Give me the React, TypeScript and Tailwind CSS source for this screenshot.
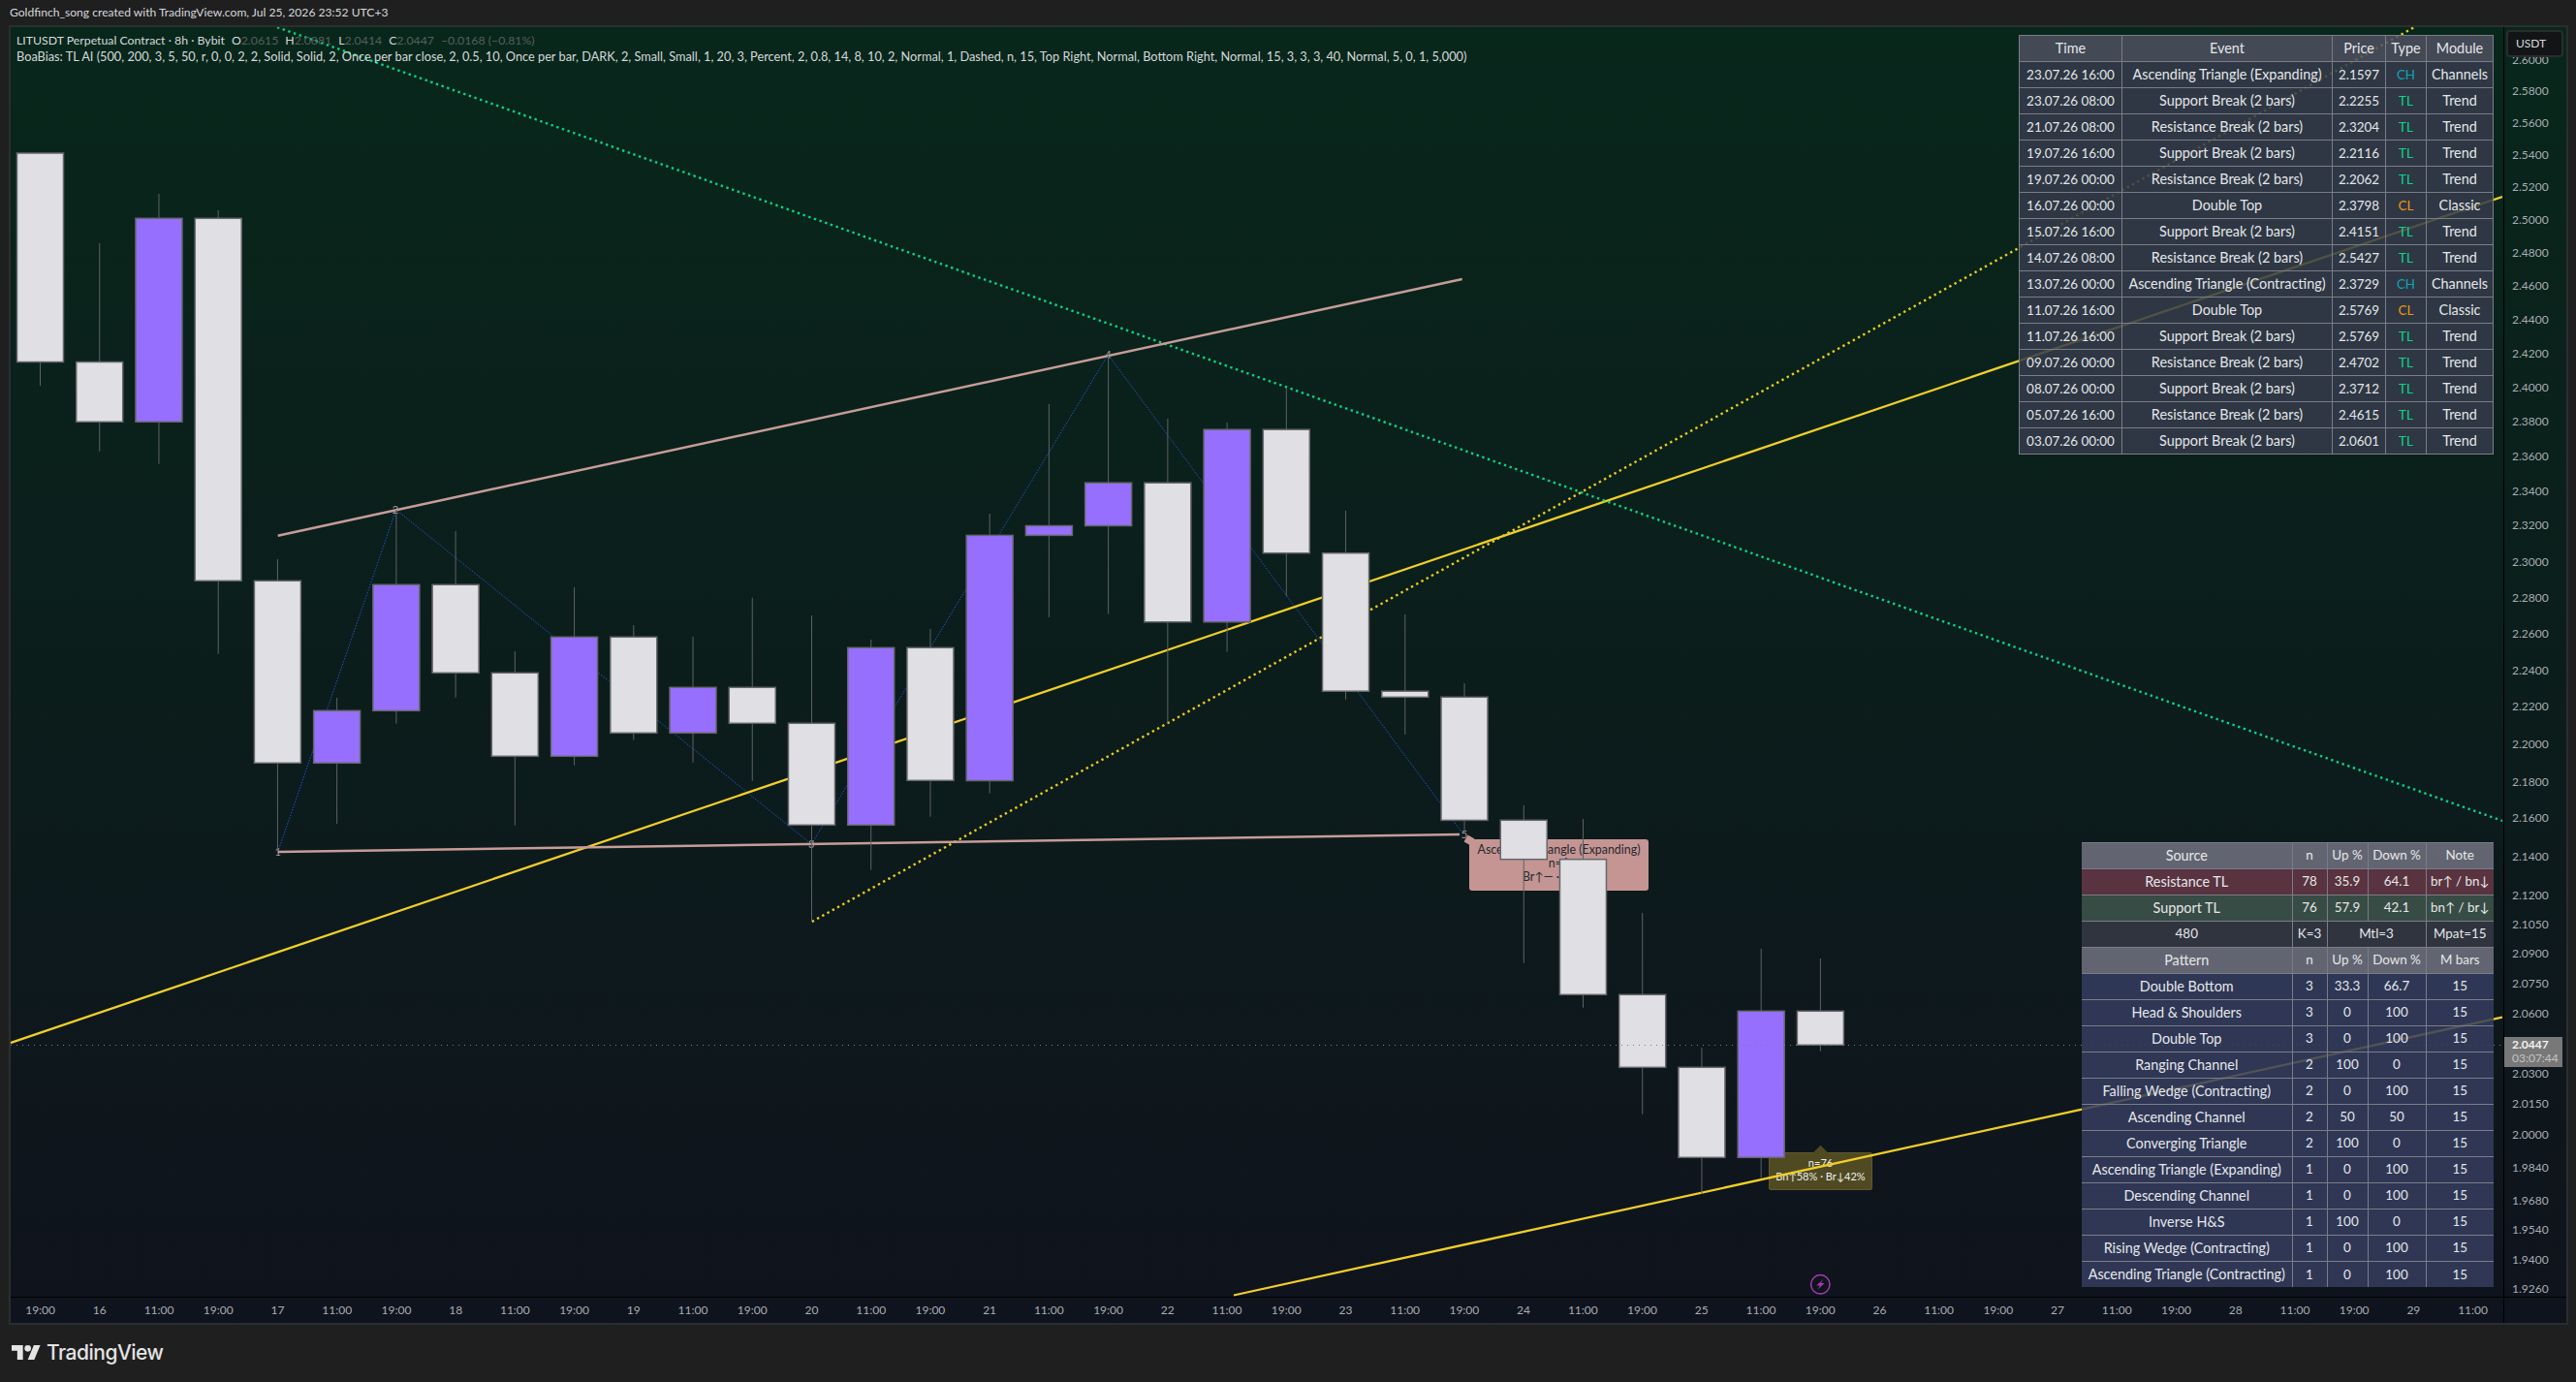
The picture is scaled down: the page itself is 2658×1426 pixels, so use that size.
import React from 'react';

const font = "font-['Lato','Liberation_Sans',sans-serif]";

// [top, bottom, wickTop, wickBottom, purple]
const candles: [number, number, number, number, boolean][] = [
  [158, 373.5, 158, 398, false],
  [373.5, 435.3, 251, 465.7, false],
  [225.3, 435.3, 200, 478.7, true],
  [225.3, 599.3, 217, 674.7, false],
  [599.3, 787.3, 577, 879, false],
  [733.3, 787.3, 720, 850, true],
  [603.3, 733.3, 526, 746.7, true],
  [603.3, 694.3, 548, 719.7, false],
  [694.3, 780.3, 672, 851.7, false],
  [657.3, 780.3, 606, 789.7, true],
  [657.3, 756.3, 645, 763.7, false],
  [709.3, 756.3, 657, 786.7, true],
  [709.3, 746.3, 616.7, 805.7, false],
  [746.3, 851.3, 635, 951, false],
  [668.3, 851.3, 660, 897.7, true],
  [668.3, 805.3, 649, 842.7, false],
  [552.4, 805.5, 530, 818.6, true],
  [542.5, 552.4, 417, 636.8, true],
  [498.2, 542.5, 366.8, 633.6, true],
  [498.2, 641.8, 432, 746.4, false],
  [443.2, 641.8, 436, 672.5, true],
  [443.2, 570.7, 400.7, 615, false],
  [570.7, 713.2, 527, 721.8, false],
  [713.2, 719.3, 634, 757.9, false],
  [719.3, 846.4, 705, 860, false],
  [846.3, 886.7, 831, 993.7, false],
  [886.7, 1026.3, 845, 1039.7, false],
  [1026.3, 1101.3, 942, 1149.7, false],
  [1101.3, 1194.3, 1081, 1231.7, false],
  [1043.3, 1194.3, 979, 1215.7, true],
  [1043.3, 1078.3, 989, 1084.7, false],
];

const prices: [string, number][] = [
  ['2.6000', 62], ['2.5800', 93.7], ['2.5600', 126.7], ['2.5400', 159.7], ['2.5200', 192.7], ['2.5000', 226.7],
  ['2.4800', 260.7], ['2.4600', 294.7], ['2.4400', 329.7], ['2.4200', 364.7], ['2.4000', 399.7], ['2.3800', 434.7],
  ['2.3600', 470.7], ['2.3400', 507], ['2.3200', 542.4], ['2.3000', 579.7], ['2.2800', 617], ['2.2600', 654],
  ['2.2400', 691.6], ['2.2200', 729], ['2.2000', 768], ['2.1800', 807], ['2.1600', 844], ['2.1400', 884.3],
  ['2.1200', 924.3], ['2.1050', 954.3], ['2.0900', 984.3], ['2.0750', 1015.3], ['2.0600', 1046.3], ['2.0300', 1108.3],
  ['2.0150', 1139.3], ['2.0000', 1171.3], ['1.9840', 1205.3], ['1.9680', 1239.3], ['1.9540', 1269.3], ['1.9400', 1300.3],
  ['1.9260', 1330.3],
];

const times = [
  '19:00', '16', '11:00', '19:00', '17', '11:00', '19:00', '18', '11:00', '19:00', '19', '11:00', '19:00', '20',
  '11:00', '19:00', '21', '11:00', '19:00', '22', '11:00', '19:00', '23', '11:00', '19:00', '24', '11:00', '19:00',
  '25', '11:00', '19:00', '26', '11:00', '19:00', '27', '11:00', '19:00', '28', '11:00', '19:00', '29', '11:00',
];

const events = [
  ['23.07.26 16:00', 'Ascending Triangle (Expanding)', '2.1597', 'CH', 'Channels'],
  ['23.07.26 08:00', 'Support Break (2 bars)', '2.2255', 'TL', 'Trend'],
  ['21.07.26 08:00', 'Resistance Break (2 bars)', '2.3204', 'TL', 'Trend'],
  ['19.07.26 16:00', 'Support Break (2 bars)', '2.2116', 'TL', 'Trend'],
  ['19.07.26 00:00', 'Resistance Break (2 bars)', '2.2062', 'TL', 'Trend'],
  ['16.07.26 00:00', 'Double Top', '2.3798', 'CL', 'Classic'],
  ['15.07.26 16:00', 'Support Break (2 bars)', '2.4151', 'TL', 'Trend'],
  ['14.07.26 08:00', 'Resistance Break (2 bars)', '2.5427', 'TL', 'Trend'],
  ['13.07.26 00:00', 'Ascending Triangle (Contracting)', '2.3729', 'CH', 'Channels'],
  ['11.07.26 16:00', 'Double Top', '2.5769', 'CL', 'Classic'],
  ['11.07.26 16:00', 'Support Break (2 bars)', '2.5769', 'TL', 'Trend'],
  ['09.07.26 00:00', 'Resistance Break (2 bars)', '2.4702', 'TL', 'Trend'],
  ['08.07.26 00:00', 'Support Break (2 bars)', '2.3712', 'TL', 'Trend'],
  ['05.07.26 16:00', 'Resistance Break (2 bars)', '2.4615', 'TL', 'Trend'],
  ['03.07.26 00:00', 'Support Break (2 bars)', '2.0601', 'TL', 'Trend'],
];

const patterns = [
  ['Double Bottom', '3', '33.3', '66.7', '15'],
  ['Head & Shoulders', '3', '0', '100', '15'],
  ['Double Top', '3', '0', '100', '15'],
  ['Ranging Channel', '2', '100', '0', '15'],
  ['Falling Wedge (Contracting)', '2', '0', '100', '15'],
  ['Ascending Channel', '2', '50', '50', '15'],
  ['Converging Triangle', '2', '100', '0', '15'],
  ['Ascending Triangle (Expanding)', '1', '0', '100', '15'],
  ['Descending Channel', '1', '0', '100', '15'],
  ['Inverse H&S', '1', '100', '0', '15'],
  ['Rising Wedge (Contracting)', '1', '0', '100', '15'],
  ['Ascending Triangle (Contracting)', '1', '0', '100', '15'],
];

const typeColor: Record<string, string> = {
  CH: 'text-[#0fa3b8]',
  TL: 'text-[#0bd58a]',
  CL: 'text-[#f2960c]',
};

const words = 'text-[14.4px]';
const cell = 'border border-[#7a7d88] p-0 text-center font-normal whitespace-nowrap';

function EventsTable() {
  return (
    <table className="absolute right-[10px] top-[8px] w-[489px] table-fixed border-collapse text-[13.4px] text-[#e4e6ea]">
      <colgroup>
        <col className="w-[106px]" />
        <col className="w-[217px]" />
        <col className="w-[55px]" />
        <col className="w-[42px]" />
        <col className="w-[69px]" />
      </colgroup>
      <thead>
        <tr className="h-[27px] bg-[#4d505f]/85">
          {['Time', 'Event', 'Price', 'Type', 'Module'].map((h) => (
            <th key={h} className={`${cell} ${words}`}>{h}</th>
          ))}
        </tr>
      </thead>
      <tbody>
        {events.map((r, i) => (
          <tr key={i} className="h-[27px] bg-[#353b4a]/85">
            <td className={cell}>{r[0]}</td>
            <td className={`${cell} ${words}`}>{r[1]}</td>
            <td className={cell}>{r[2]}</td>
            <td className={`${cell} ${typeColor[r[3]]}`}>{r[3]}</td>
            <td className={`${cell} ${words}`}>{r[4]}</td>
          </tr>
        ))}
      </tbody>
    </table>
  );
}

const cellB = 'border-x border-t border-[#7a7d88] first:border-l-0 last:border-r-0 p-0 text-center font-normal whitespace-nowrap';

function StatsTable() {
  const head = (labels: string[]) => (
    <tr className="h-[27px] bg-[#727380]/85">
      {labels.map((h, i) => (
        <th key={h} className={`${cellB} ${i === 0 ? words : ''}`}>{h}</th>
      ))}
    </tr>
  );
  return (
    <table className="absolute bottom-[10px] right-[10px] w-[425px] table-fixed border-collapse text-[13.4px] text-[#e6e7ea]">
      <colgroup>
        <col className="w-[217px]" />
        <col className="w-[36px]" />
        <col className="w-[42px]" />
        <col className="w-[60px]" />
        <col className="w-[70px]" />
      </colgroup>
      <tbody>
        {head(['Source', 'n', 'Up %', 'Down %', 'Note'])}
        <tr className="h-[27px] bg-[#673845]/85">
          <td className={`${cellB} ${words}`}>Resistance TL</td>
          <td className={cellB}>78</td>
          <td className={cellB}>35.9</td>
          <td className={cellB}>64.1</td>
          <td className={cellB}>br↑ / bn↓</td>
        </tr>
        <tr className="h-[27px] bg-[#3f564b]/85">
          <td className={`${cellB} ${words}`}>Support TL</td>
          <td className={cellB}>76</td>
          <td className={cellB}>57.9</td>
          <td className={cellB}>42.1</td>
          <td className={cellB}>bn↑ / br↓</td>
        </tr>
        <tr className="h-[27px] bg-[#363945]/85">
          <td className={cellB}>480</td>
          <td className={cellB}>K=3</td>
          <td className={cellB} colSpan={2}>Mtl=3</td>
          <td className={cellB}>Mpat=15</td>
        </tr>
        {head(['Pattern', 'n', 'Up %', 'Down %', 'M bars'])}
        {patterns.map((r) => (
          <tr key={r[0]} className="h-[27px] bg-[#353d5f]/85">
            {r.map((c, i) => (
              <td key={i} className={`${cellB} ${i === 0 ? words : ''}`}>{c}</td>
            ))}
          </tr>
        ))}
      </tbody>
    </table>
  );
}

function ChartDrawing() {
  return (
    <svg className="absolute inset-0" width="2571" height="1310" viewBox="11 28 2571 1310">
      {/* zigzag */}
      <polyline
        points="286.7,879 408.7,526 837.3,871 1143.4,366 1510,861"
        fill="none"
        stroke="#2152d6"
        strokeWidth="1"
        strokeDasharray="1.5 1.5"
      />
      {/* trend lines */}
      <line x1="10" y1="1076.4" x2="2582" y2="203" stroke="#f2cf26" strokeWidth="2.3" />
      <line x1="1273" y1="1336.5" x2="2582" y2="1049.5" stroke="#f2cf26" strokeWidth="2.3" />
      <line x1="837.8" y1="951" x2="2493" y2="27" stroke="#eccb23" strokeWidth="2.4" strokeDasharray="2.4 3.6" />
      <line x1="286" y1="28" x2="2582" y2="847" stroke="#06d681" strokeWidth="2.4" strokeDasharray="2.4 3.6" />
      <line x1="286.7" y1="552.7" x2="1508.7" y2="288" stroke="#c79c99" strokeWidth="2.5" />
      <line x1="286.7" y1="879" x2="1506" y2="861" stroke="#c79c99" strokeWidth="2.5" />
      {[
        ['1', 286.7, 879],
        ['2', 408, 526],
        ['3', 837.3, 871],
        ['4', 1143.4, 366],
        ['5', 1511, 861],
      ].map(([n, x, y]) => (
        <text key={n as string} x={x as number} y={(y as number) + 4} textAnchor="middle" fontSize="11" fill="#a99a9a" fontFamily="Lato">
          {n}
        </text>
      ))}
      {/* candles */}
      {candles.map(([t, b, wt, wb, up], i) => {
        const cx = 41.5 + 61.23 * i;
        return (
          <g key={i}>
            <line x1={cx} y1={wt} x2={cx} y2={wb} stroke="#5f6166" strokeWidth="1" />
            <rect x={cx - 24} y={t} width="48" height={b - t} fill={up ? '#976fff' : '#dfdfe4'} stroke="#66676c" strokeWidth="1.5" />
          </g>
        );
      })}
      {/* last price */}
      <line x1="11" y1="1078.5" x2="2582" y2="1078.5" stroke="#7b7e85" strokeWidth="1" strokeDasharray="1 5" />
      {/* alert marker */}
      <circle cx="1878.3" cy="1325.3" r="9.7" fill="none" stroke="#a53bb0" strokeWidth="1.5" />
      <path d="M1881.5 1319.8 L1874.3 1326.6 L1878 1326.6 L1875.3 1331 L1882.6 1324 L1878.8 1324 Z" fill="#a53bb0" />
    </svg>
  );
}

function Ohlc({ k, v }: { k: string; v: string }) {
  return (
    <span>
      {k}
      <span className="text-[#585d5f]">{v}</span>
    </span>
  );
}

export default function App() {
  return (
    <div className={`flex h-[1426px] w-[2658px] flex-col overflow-hidden bg-[#1f1f1f] ${font} text-[13px] text-[#d6d8dc]`}>
      <div className="flex h-[26px] items-center pl-[10px] text-[12.1px]">
        Goldfinch_song created with TradingView.com, Jul 25, 2026 23:52 UTC+3
      </div>

      <div className="ml-[9px] mr-[8px] flex h-[1341px] flex-col border-2 border-[#2b2e30] bg-gradient-to-b from-[#08271b] via-[#0b1d1b] to-[#0f131d]">
        <div className="flex flex-1">
          <div className="relative flex-1 overflow-hidden">
            {/* labels sit under the candles */}
            <div className="absolute left-[1505px] top-[838px] h-[53px] w-[185px] rounded-[3px] bg-[#c49593] pt-[4px] text-center text-[12.4px] leading-[14px] text-[#27292c]">
              <div className="absolute -left-[4px] -top-[3px] size-[8px] rotate-[30deg] bg-[#c49593]" />
              <div>Ascending Triangle (Expanding)</div>
              <div>n=1</div>
              <div>Br↑— · Bn↓—</div>
            </div>
            <div className="absolute left-[1814px] top-[1161px] h-[39px] w-[107px] rounded-[2px] border border-[#5f5a2a] bg-[#4f4a22] pt-[3px] text-center text-[11px] leading-[14px] text-[#eeeeee]">
              <div className="absolute -top-[6px] left-[47px] size-[11px] rotate-45 bg-[#4f4a22]" />
              <div className="relative">n=76</div>
              <div className="relative">Bn↑58% · Br↓42%</div>
            </div>

            <ChartDrawing />

            <div className="absolute left-[6px] top-[5px] whitespace-nowrap leading-[17px] text-[#d6d8dc]">
              <div className="flex gap-[7px] text-[12.3px]">
                <span>LITUSDT Perpetual Contract · 8h · Bybit</span>
                <Ohlc k="O" v="2.0615" />
                <Ohlc k="H" v="2.0881" />
                <Ohlc k="L" v="2.0414" />
                <Ohlc k="C" v="2.0447" />
                <span className="text-[#585d5f]">−0.0168 (−0.81%)</span>
              </div>
              <div className="text-[12.75px]">
                BoaBias: TL AI (500, 200, 3, 5, 50, r, 0, 0, 2, 2, Solid, Solid, 2, Once per bar close, 2, 0.5, 10, Once per bar, DARK, 2, Small, Small, 1, 20, 3, Percent, 2, 0.8, 14, 8, 10, 2, Normal, 1, Dashed, n, 15, Top Right, Normal, Bottom Right, Normal, 15, 3, 3, 3, 40, Normal, 5, 0, 1, 5,000)
              </div>
            </div>

            <EventsTable />
            <StatsTable />
          </div>

          <div className="relative w-[65px] border-l border-black text-[12px] text-[#a9acb2]">
            {prices.map(([p, y]) => (
              <div key={p} className="absolute left-[8px] leading-[14px]" style={{ top: y - 35 }}>
                {p}
              </div>
            ))}
            <div className="absolute left-[2px] top-[3px] flex h-[28px] w-[59px] items-center rounded-[4px] border-2 border-[#2a2c30] bg-[#131416] pl-[8px] text-[12px] text-[#d6d8dc]">
              USDT
            </div>
            <div className="absolute left-0 top-[1042px] h-[31px] w-[60px] bg-[#787878] pl-[8px] pt-[1px] text-[12px] leading-[14px]">
              <div className="font-bold text-[#f2f2f2]">2.0447</div>
              <div className="text-[#c4c4c4]">03:07:44</div>
            </div>
          </div>
        </div>

        <div className="flex h-[27px] border-t border-black text-[12px] text-[#a9acb2]">
          <div className="grid flex-1 grid-cols-[repeat(42,61.23px)] items-center">
            {times.map((t, i) => (
              <div key={i} className="text-center">{t}</div>
            ))}
          </div>
          <div className="w-[65px] border-l border-black" />
        </div>
      </div>

      <div className="flex flex-1 items-center gap-[6px] pl-[12px] pb-[2px]">
        <svg width="30" height="15" viewBox="0 4 36 18" fill="#e4e4e4">
          <path d="M14 22H7V11H0V4h14v18zM28 22h-8l7.5-18h8L28 22z" />
          <circle cx="20" cy="8" r="4" />
        </svg>
        <span className="font-['Inter',sans-serif] text-[21px] font-medium tracking-[-0.5px] text-[#e4e4e4]">TradingView</span>
      </div>
    </div>
  );
}
